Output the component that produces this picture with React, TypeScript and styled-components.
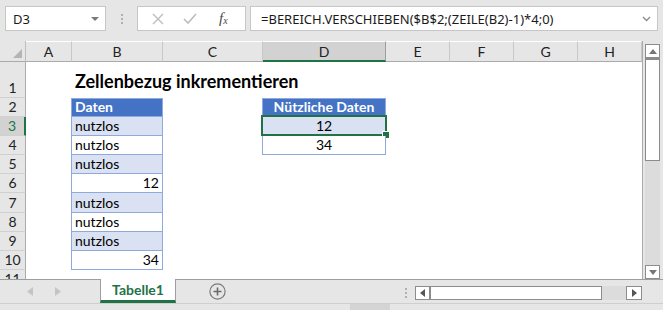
import styled, { createGlobalStyle } from 'styled-components'

const GlobalStyle = createGlobalStyle`
	html, body {
		margin: 0;
		padding: 0;
		background: #ffffff;
	}
	body {
		font-family: Lato, 'Liberation Sans', sans-serif;
		color: #000;
	}
`

type CellKind = 'plain' | 'head' | 'band' | 'body'
type CellAlign = 'left' | 'center' | 'right'

type CellType = {
	text?: string
	kind?: CellKind
	align?: CellAlign
	title?: boolean
	selected?: boolean
}

const COLUMNS = [
	{ name: 'A', width: 46 },
	{ name: 'B', width: 91 },
	{ name: 'C', width: 100 },
	{ name: 'D', width: 123 },
	{ name: 'E', width: 64 },
	{ name: 'F', width: 64 },
	{ name: 'G', width: 64 },
	{ name: 'H', width: 64 },
]

// only the cells that hold something, by row and column letter
const ROWS: Record<string, CellType>[] = [
	{ B: { text: 'Zellenbezug inkrementieren', title: true } },
	{
		B: { text: 'Daten', kind: 'head' },
		D: { text: 'Nützliche Daten', kind: 'head', align: 'center' },
	},
	{
		B: { text: 'nutzlos', kind: 'band' },
		D: { text: '12', kind: 'band', align: 'center', selected: true },
	},
	{
		B: { text: 'nutzlos', kind: 'body' },
		D: { text: '34', kind: 'body', align: 'center' },
	},
	{ B: { text: 'nutzlos', kind: 'band' } },
	{ B: { text: '12', kind: 'body', align: 'right' } },
	{ B: { text: 'nutzlos', kind: 'band' } },
	{ B: { text: 'nutzlos', kind: 'body' } },
	{ B: { text: 'nutzlos', kind: 'band' } },
	{ B: { text: '34', kind: 'body', align: 'right' } },
	{},
]

const App = () => {
	return (
		<>
			<GlobalStyle />
			<Window>
				<FormulaBar>
					<NameBox>
						<span>D3</span>
						<DropTriangle />
					</NameBox>
					<Grip>
						<i />
						<i />
						<i />
					</Grip>
					<FxBox>
						<FxButton>
							<svg width='12' height='12' viewBox='0 0 12 12'>
								<path d='M1 1 L11 11 M11 1 L1 11' stroke='#bdbdbd' strokeWidth='1.4' fill='none' />
							</svg>
						</FxButton>
						<FxButton>
							<svg width='14' height='12' viewBox='0 0 14 12'>
								<path d='M1 6 L5 10 L13 1' stroke='#bdbdbd' strokeWidth='1.6' fill='none' />
							</svg>
						</FxButton>
						<FxLabel>
							f<sub>x</sub>
						</FxLabel>
					</FxBox>
					<FormulaInput>
						<span>=BEREICH.VERSCHIEBEN($B$2;(ZEILE(B2)-1)*4;0)</span>
						<svg width='9' height='6' viewBox='0 0 9 6'>
							<path d='M1 1 L4.5 4.5 L8 1' stroke='#8a8a8a' strokeWidth='1.3' fill='none' />
						</svg>
					</FormulaInput>
				</FormulaBar>

				<SheetArea>
					<Sheet>
						<Corner>
							<svg width='9' height='9' viewBox='0 0 9 9'>
								<path d='M9 0 L9 9 L0 9 Z' fill='#b4b4b4' />
							</svg>
						</Corner>
						{COLUMNS.map((c) => (
							<ColHeader key={c.name} $active={c.name === 'D'}>
								{c.name}
							</ColHeader>
						))}
						{ROWS.map((row, i) => (
							<RowGroup key={i}>
								<RowHeader $active={i === 2}>{i + 1}</RowHeader>
								{COLUMNS.map((c) => {
									const cell = row[c.name]
									if (!cell) return <Cell key={c.name} $kind='plain' $align='left' />
									if (cell.title) {
										return (
											<TitleCell key={c.name}>
												<span>{cell.text}</span>
											</TitleCell>
										)
									}
									return (
										<Cell key={c.name} $kind={cell.kind ?? 'plain'} $align={cell.align ?? 'left'}>
											{cell.text}
											{cell.selected && (
												<Selection>
													<FillHandle />
												</Selection>
											)}
										</Cell>
									)
								})}
							</RowGroup>
						))}
					</Sheet>
					<VScroll>
						<ScrollArrow>
							<svg width='8' height='5' viewBox='0 0 8 5'>
								<path d='M0 5 L4 0 L8 5 Z' fill='#777' />
							</svg>
						</ScrollArrow>
						<VThumb />
						<Track />
						<ScrollArrow>
							<svg width='8' height='5' viewBox='0 0 8 5'>
								<path d='M0 0 L8 0 L4 5 Z' fill='#777' />
							</svg>
						</ScrollArrow>
					</VScroll>
				</SheetArea>

				<TabBar>
					<TabNav>
						<svg width='6' height='9' viewBox='0 0 6 9'>
							<path d='M6 0 L6 9 L0 4.5 Z' fill='#c4c4c4' />
						</svg>
						<svg width='6' height='9' viewBox='0 0 6 9'>
							<path d='M0 0 L0 9 L6 4.5 Z' fill='#c4c4c4' />
						</svg>
					</TabNav>
					<SheetTab>Tabelle1</SheetTab>
					<AddSheet>
						<svg width='17' height='17' viewBox='0 0 17 17'>
							<circle cx='8.5' cy='8.5' r='7.6' stroke='#7a7a7a' strokeWidth='1.2' fill='none' />
							<path d='M8.5 4.5 V12.5 M4.5 8.5 H12.5' stroke='#6a6a6a' strokeWidth='1.6' />
						</svg>
					</AddSheet>
					<Spacer />
					<Grip $small>
						<i />
						<i />
						<i />
					</Grip>
					<HScroll>
						<HArrow>
							<svg width='5' height='8' viewBox='0 0 5 8'>
								<path d='M5 0 L5 8 L0 4 Z' fill='#555' />
							</svg>
						</HArrow>
						<HThumb />
						<Track />
						<HArrow $right>
							<svg width='5' height='8' viewBox='0 0 5 8'>
								<path d='M0 0 L0 8 L5 4 Z' fill='#555' />
							</svg>
						</HArrow>
					</HScroll>
				</TabBar>
				<StatusStrip>
					<StatusMark />
				</StatusStrip>
			</Window>
		</>
	)
}

const Window = styled.div`
	width: 663px;
	height: 310px;
	display: flex;
	flex-direction: column;
	overflow: hidden;
	background: #e6e6e6;
`

const FormulaBar = styled.div`
	height: 41px;
	box-sizing: border-box;
	padding: 6px 5px 0 5px;
	display: flex;
	align-items: flex-start;
	background: #e6e6e6;
`

const BoxBase = styled.div`
	height: 25px;
	box-sizing: border-box;
	background: #ffffff;
	border: 1px solid #c6c6c6;
	display: flex;
	align-items: center;
`

const NameBox = styled(BoxBase)`
	width: 101px;
	padding: 0 6px 0 7px;
	justify-content: space-between;
	font-family: 'Noto Sans', 'Liberation Sans', sans-serif;
	font-size: 13px;
	color: #1a1a1a;
`

const DropTriangle = styled.span`
	width: 0;
	height: 0;
	border-left: 4px solid transparent;
	border-right: 4px solid transparent;
	border-top: 4px solid #7a7a7a;
`

const Grip = styled.div<{ $small?: boolean }>`
	width: ${(p) => (p.$small ? '14px' : '31px')};
	height: 25px;
	display: flex;
	flex-direction: column;
	align-items: center;
	justify-content: center;
	gap: 2px;
	flex-shrink: 0;
	& i {
		display: block;
		width: 2px;
		height: 2px;
		background: #b0b0b0;
	}
`

const FxBox = styled(BoxBase)`
	width: 109px;
	padding-left: 13px;
	gap: 18px;
`

const FxButton = styled.span`
	width: 14px;
	display: flex;
	align-items: center;
	justify-content: center;
`

const FxLabel = styled.span`
	font-family: 'Liberation Serif', 'DejaVu Serif', serif;
	font-style: italic;
	font-size: 15px;
	color: #4a4a4a;
	margin-left: 4px;
	& sub {
		font-size: 10px;
		vertical-align: -1px;
	}
`

const FormulaInput = styled(BoxBase)`
	flex: 1;
	margin-left: 4px;
	padding: 0 6px 0 10px;
	justify-content: space-between;
	font-family: 'Noto Sans', 'Liberation Sans', sans-serif;
	font-size: 13px;
	color: #1a1a1a;
`

const SheetArea = styled.div`
	height: 238px;
	display: flex;
`

const Sheet = styled.div`
	width: 642px;
	height: 238px;
	overflow: hidden;
	display: grid;
	grid-template-columns: 26px ${COLUMNS.map((c) => c.width + 'px').join(' ')};
	grid-template-rows: 20.5px 36px repeat(9, 19.2px) 1fr;
	background: #ffffff;
	border-right: 1px solid #ababab;
	box-sizing: content-box;
`

const RowGroup = styled.div`
	display: contents;
`

const HeaderBase = styled.div`
	background: #e6e6e6;
	box-sizing: border-box;
	font-size: 14px;
	color: #222;
	display: flex;
	justify-content: center;
`

const Corner = styled(HeaderBase)`
	align-items: flex-end;
	justify-content: flex-end;
	padding: 0 3px 3px 0;
	border-right: 1px solid #bdbdbd;
	border-bottom: 1px solid #ababab;
`

const ColHeader = styled(HeaderBase)<{ $active: boolean }>`
	align-items: center;
	padding-top: 1px;
	background: ${(p) => (p.$active ? '#d2d2d2' : '#e6e6e6')};
	border-right: 1px solid ${(p) => (p.$active ? '#9d9d9d' : '#c8c8c8')};
	border-bottom: ${(p) => (p.$active ? '2px solid #217346' : '1px solid #ababab')};
	border-top: 1px solid transparent;
	background-clip: padding-box;
`

const RowHeader = styled(HeaderBase)<{ $active: boolean }>`
	align-items: flex-end;
	padding-bottom: 1px;
	line-height: 17px;
	background: ${(p) => (p.$active ? '#d2d2d2' : '#e6e6e6')};
	color: ${(p) => (p.$active ? '#217346' : '#222')};
	border-bottom: 1px solid #d0d0d0;
	border-right: ${(p) => (p.$active ? '2px solid #217346' : '1px solid #ababab')};
`

const kindBg: Record<CellKind, string> = {
	plain: 'transparent',
	head: '#4472c4',
	band: '#d9e1f2',
	body: '#ffffff',
}

const Cell = styled.div<{ $kind: CellKind; $align: CellAlign }>`
	position: relative;
	box-sizing: border-box;
	display: flex;
	align-items: flex-end;
	justify-content: ${(p) =>
		p.$align === 'right' ? 'flex-end' : p.$align === 'center' ? 'center' : 'flex-start'};
	padding: 0 3px 1px 3px;
	font-size: 14px;
	line-height: 17px;
	white-space: nowrap;
	background: ${(p) => kindBg[p.$kind]};
	color: ${(p) => (p.$kind === 'head' ? '#ffffff' : '#000')};
	font-weight: ${(p) => (p.$kind === 'head' ? 700 : 400)};
	${(p) =>
		p.$kind !== 'plain' &&
		`
		border-left: 1px solid #8ea9db;
		border-right: 1px solid #8ea9db;
		border-bottom: 1px solid #8ea9db;
		margin-left: -1px;
	`}
	${(p) => p.$kind === 'head' && 'border-top: 1px solid #8ea9db;'}
`

const TitleCell = styled.div`
	position: relative;
	display: flex;
	align-items: flex-end;
	padding: 0 0 7px 3px;
	overflow: visible;
	white-space: nowrap;
	& span {
		font-size: 18px;
		font-weight: 700;
		line-height: 20px;
	}
`

const Selection = styled.div`
	position: absolute;
	left: -2px;
	top: -2px;
	right: -2px;
	bottom: -1px;
	border: 2px solid #217346;
	pointer-events: none;
`

const FillHandle = styled.div`
	position: absolute;
	right: -5px;
	bottom: -5px;
	width: 6px;
	height: 6px;
	background: #217346;
	border: 1px solid #ffffff;
`

const VScroll = styled.div`
	width: 20px;
	box-sizing: border-box;
	padding: 3px 3px 0 2px;
	display: flex;
	flex-direction: column;
	background: #e6e6e6;
`

const ScrollArrow = styled.div`
	height: 14px;
	box-sizing: border-box;
	border: 1px solid #8c8c8c;
	background: #ffffff;
	display: flex;
	align-items: center;
	justify-content: center;
	flex-shrink: 0;
`

const VThumb = styled.div`
	height: 103px;
	box-sizing: border-box;
	border: 1px solid #8c8c8c;
	border-top-width: 2px;
	background: #ffffff;
	flex-shrink: 0;
`

const Track = styled.div`
	flex: 1;
	background: #dcdcdc;
`

const TabBar = styled.div`
	height: 24px;
	display: flex;
	align-items: stretch;
	border-top: 1px solid #9d9d9d;
	box-sizing: border-box;
	background: #e6e6e6;
`

const TabNav = styled.div`
	width: 100px;
	display: flex;
	align-items: center;
	gap: 22px;
	padding-left: 27px;
	box-sizing: border-box;
`

const SheetTab = styled.div`
	width: 76px;
	margin-top: -1px;
	box-sizing: border-box;
	background: #ffffff;
	border-left: 1px solid #9d9d9d;
	border-right: 1px solid #9d9d9d;
	border-bottom: 3px solid #217346;
	display: flex;
	align-items: center;
	justify-content: center;
	font-size: 14px;
	font-weight: 700;
	color: #217346;
`

const AddSheet = styled.div`
	margin-left: 33px;
	display: flex;
	align-items: center;
`

const Spacer = styled.div`
	flex: 1;
`

const HScroll = styled.div`
	width: 227px;
	height: 14px;
	margin: 6px 21px 0 2px;
	display: flex;
`

const HArrow = styled.div<{ $right?: boolean }>`
	width: 16px;
	box-sizing: border-box;
	border: 1px solid #8c8c8c;
	border-right-width: ${(p) => (p.$right ? '1px' : '2px')};
	background: #ffffff;
	display: flex;
	align-items: center;
	justify-content: center;
`

const HThumb = styled.div`
	width: 171px;
	box-sizing: border-box;
	border: 1px solid #8c8c8c;
	border-left: none;
	background: #ffffff;
`

const StatusStrip = styled.div`
	flex: 1;
	background: #e6e6e6;
	border-top: 1px solid #cfcfcf;
	display: flex;
	padding-left: 350px;
`

const StatusMark = styled.div`
	width: 40px;
	background: #d4d4d4;
`

export default App
